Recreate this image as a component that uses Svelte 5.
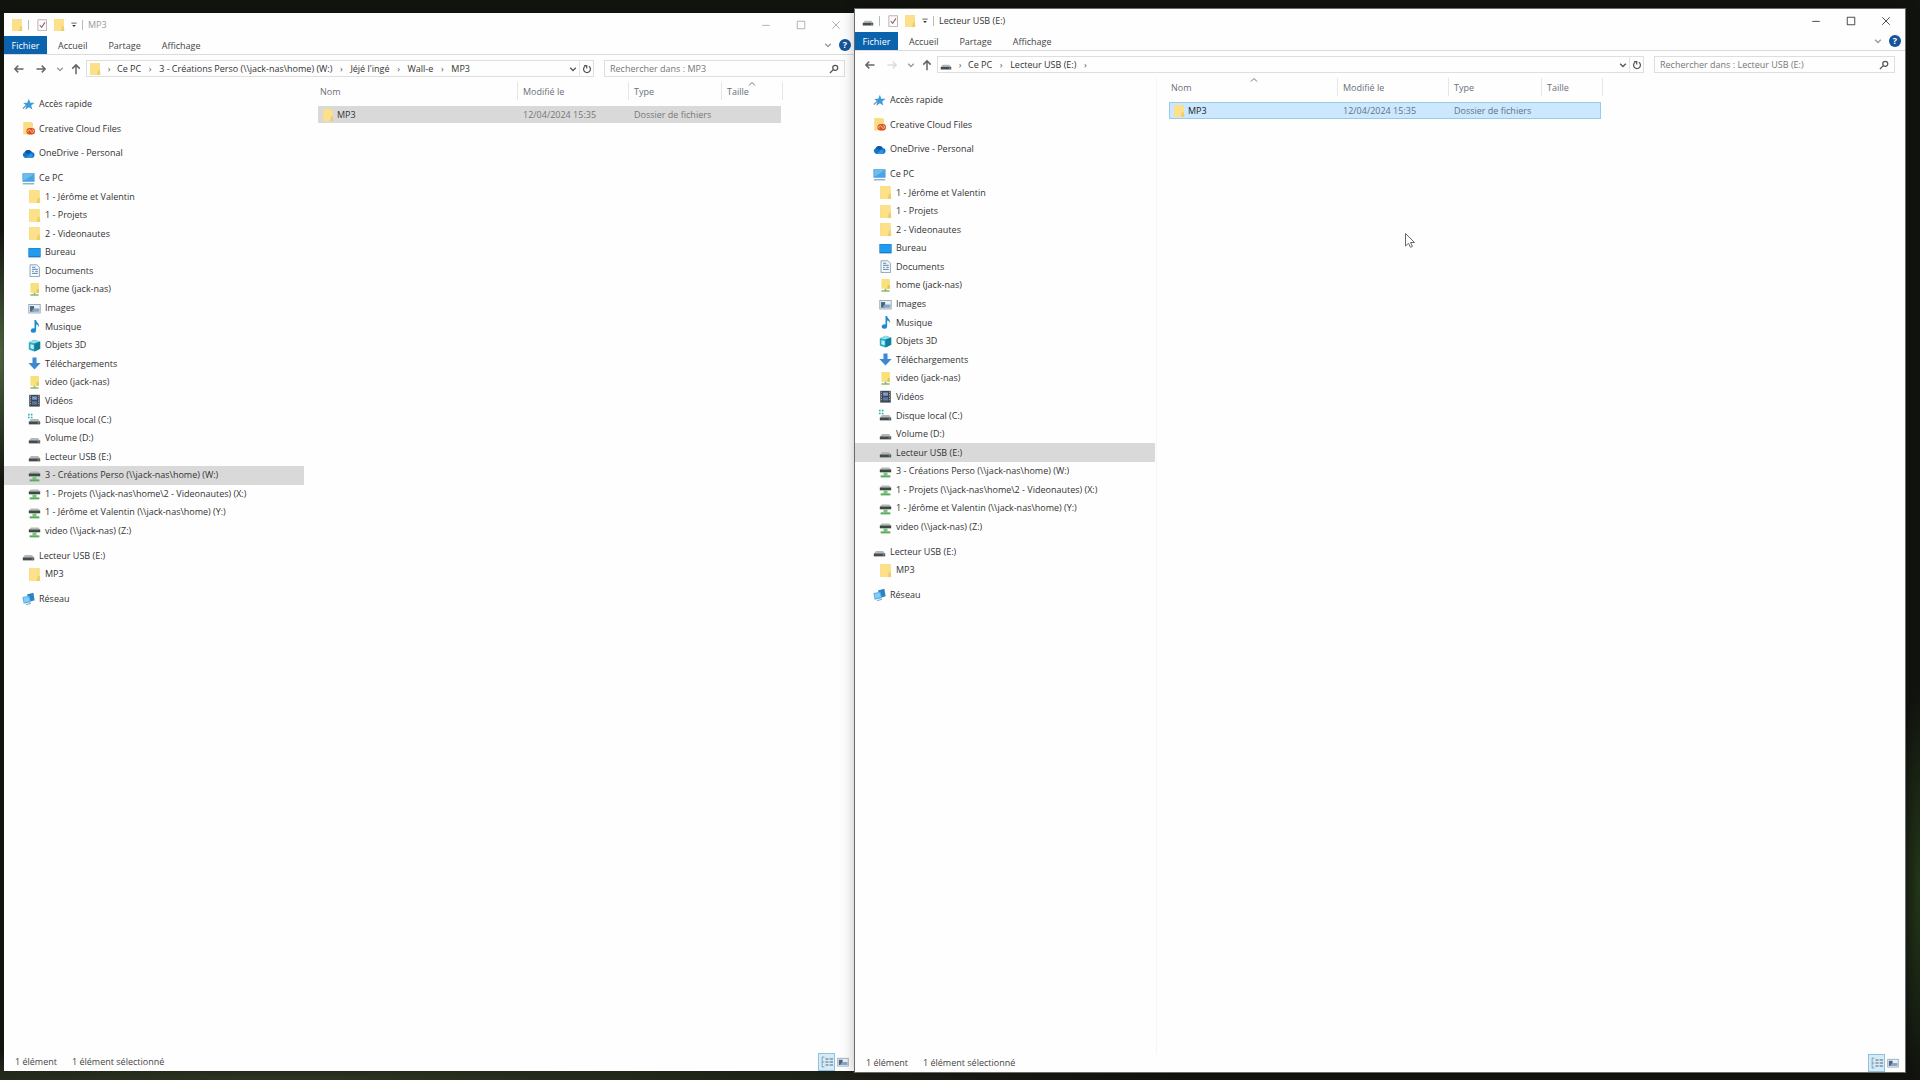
<script>
  const tree = [
    { label: 'Accès rapide', icon: 'star', top: true },
    { label: 'Creative Cloud Files', icon: 'cloudfolder', top: true },
    { label: 'OneDrive - Personal', icon: 'onedrive', top: true },
    { label: 'Ce PC', icon: 'pc', top: true },
    { label: '1 - Jérôme et Valentin', icon: 'folder' },
    { label: '1 - Projets', icon: 'folder' },
    { label: '2 - Videonautes', icon: 'folder' },
    { label: 'Bureau', icon: 'desktop' },
    { label: 'Documents', icon: 'document' },
    { label: 'home (jack-nas)', icon: 'netfolder' },
    { label: 'Images', icon: 'picture' },
    { label: 'Musique', icon: 'music' },
    { label: 'Objets 3D', icon: 'cube' },
    { label: 'Téléchargements', icon: 'download' },
    { label: 'video (jack-nas)', icon: 'netfolder' },
    { label: 'Vidéos', icon: 'film' },
    { label: 'Disque local (C:)', icon: 'sysdrive' },
    { label: 'Volume (D:)', icon: 'drive' },
    { label: 'Lecteur USB (E:)', icon: 'drive', id: 'E' },
    { label: '3 - Créations Perso (\\\\jack-nas\\home) (W:)', icon: 'netdrive', id: 'W' },
    { label: '1 - Projets (\\\\jack-nas\\home\\2 - Videonautes) (X:)', icon: 'netdrive' },
    { label: '1 - Jérôme et Valentin (\\\\jack-nas\\home) (Y:)', icon: 'netdrive' },
    { label: 'video (\\\\jack-nas) (Z:)', icon: 'netdrive' },
    { label: 'Lecteur USB (E:)', icon: 'drive', top: true },
    { label: 'MP3', icon: 'folder' },
    { label: 'Réseau', icon: 'network', top: true }
  ];

  const windows = [
    {
      key: 'left', title: 'MP3', icon: 'folder', active: false, selected: 'W', sort: 'Taille', forward: true,
      path: ['Ce PC', '3 - Créations Perso (\\\\jack-nas\\home) (W:)', "Jéjé l'ingé", 'Wall-e', 'MP3'], trailing: false
    },
    {
      key: 'right', title: 'Lecteur USB (E:)', icon: 'drive', active: true, selected: 'E', sort: 'Nom', forward: false,
      path: ['Ce PC', 'Lecteur USB (E:)'], trailing: true
    }
  ];

  const columns = ['Nom', 'Modifié le', 'Type', 'Taille'];
  const tabs = ['Accueil', 'Partage', 'Affichage'];
</script>

{#snippet icon(name)}
  <svg class="icon" viewBox="0 0 16 16" aria-hidden="true">
    {#if name === 'folder'}
      <path d="M1.500 0H14v12.500L15 13v3H1.500z" fill="#f0d068" />
      <path d="M1.500 0h10l3 1.500V16h-13z" fill="#fce08a" />
      <path d="M12.500 9l2 1v6H10.500z" fill="#edcd66" />
    {:else if name === 'star'}
      <path d="M8.500 1l1.700 4.700 5.300.2-4.200 3.200 1.500 5.200-4.400-2.900L4 14.500l1.400-5.300L1.500 6l5-.3z" fill="#3b9bdc" />
      <path d="M1 13l4-4" stroke="#6d8ea8" stroke-width="1.500" />
    {:else if name === 'cloudfolder'}
      <path d="M1.500 0h10l2 1.500V15.500h-12z" fill="#fbdc83" />
      <rect x="5.500" y="7.500" width="10.500" height="8" rx="4" fill="#d8501d" />
      <path d="M8 12.800a1.700 1.700 0 1 1 2.500-2l1.500 1.800a1.600 1.600 0 1 0 0-2.800" fill="none" stroke="#ffe2cc" stroke-width="1" />
    {:else if name === 'onedrive'}
      <path d="M4 13.500a4 4 0 0 1-.6-7.500A5 5 0 0 1 12 6a3.800 3.800 0 0 1 .5 7.500z" fill="#1673c8" />
      <path d="M3.400 6A5 5 0 0 1 12 6L7.500 8.500z" fill="#0d55a0" />
      <path d="M4 13.500l7-5.500a4 4 0 0 1 1.500 5.500z" fill="#2c94e4" />
    {:else if name === 'pc'}
      <rect x=".5" y="1.500" width="15" height="10.500" fill="#4f9fd6" />
      <rect x="1.500" y="2.500" width="13" height="8.500" fill="#6dbcf0" />
      <path d="M1.500 11l13-8.500V11z" fill="#4aa5e4" />
      <path d="M1 14.500h14" stroke="#76a4c4" stroke-width="1.500" />
    {:else if name === 'desktop'}
      <rect x=".5" y="2.500" width="15" height="11.500" fill="#1876c0" />
      <rect x="1" y="3" width="14" height="9.500" fill="#1f9cf0" />
    {:else if name === 'document'}
      <path d="M2.500 1h8.500l3 3v11.500H2.500z" fill="#f5f9fc" stroke="#7890a8" />
      <path d="M5 4h4M5 6.500h7M5 9h2M9 9h3M5 11.500h7" stroke="#4f7fb0" stroke-width="1.200" />
    {:else if name === 'netfolder'}
      <path d="M3 0h9.500l1 1V12H3z" fill="#f8e07c" />
      <path d="M11 7l2.500 1v4H10z" fill="#dfc75c" />
      <path d="M8 12v3M3 14.800h10" stroke="#8fb56a" stroke-width="2" />
    {:else if name === 'picture'}
      <rect x="1" y="3" width="14" height="10.500" fill="#e8f0f6" stroke="#8b9db0" />
      <path d="M2.500 5h5v7h-5z" fill="#4a6684" />
      <path d="M7 8h7v4H4z" fill="#87a5c0" />
    {:else if name === 'music'}
      <path d="M8 0h2c0 3.500 4.500 4 3.500 8.500-1-2.200-2-2.800-3.500-3V13A3.300 2.700 0 1 1 8 10.500z" fill="#1f88ce" />
    {:else if name === 'cube'}
      <path d="M1 4l7-3 7 2v9l-7 3.500L1 13z" fill="#28a9c4" />
      <path d="M1 4l7-3 7 2-7 2.500z" fill="#8fe0ea" />
      <path d="M8 5.500L15 3v9l-7 3.500z" fill="#127e9c" />
      <path d="M3 6.500l4 1v5l-4-1z" fill="#c3f2f4" />
    {:else if name === 'download'}
      <path d="M5.500 .5h5v7H15.500L8 15.500.5 7.500h5z" fill="#3d8ad0" />
    {:else if name === 'film'}
      <rect x="1.500" y="1" width="13" height="14.500" fill="#3d4653" />
      <path d="M3 2v12M13 2v12" stroke="#a9b4c2" stroke-width="1.200" stroke-dasharray="1.500 1.500" />
      <path d="M5 3h6v4H5z" fill="#7f9cc8" />
      <path d="M5 9h6v4H5z" fill="#5d79a4" />
    {:else if name === 'drive' || name === 'sysdrive'}
      {#if name === 'sysdrive'}
        <path d="M0 1h2v2H0zM3.500 1h2v2h-2zM0 4.500h2v2H0zM3.500 4.500h2v2h-2z" fill="#28b5b0" />
      {/if}
      <path d="M3.500 7.500h9L15 11H1z" fill="#b5b8ba" />
      <path d="M1 10.500h14V14H1z" fill="#444a4e" />
      <path d="M12 12.200h2" stroke="#9fd6a0" />
    {:else if name === 'netdrive'}
      <path d="M3.500 3h9L15 5.500H1z" fill="#b2b8b4" />
      <path d="M1 5.500h14V9H1z" fill="#3c4a42" />
      <path d="M5.500 9h5v4h-5z" fill="#7fbf82" />
      <path d="M2 14h12" stroke="#58ad5c" stroke-width="2.500" />
    {:else if name === 'network'}
      <path d="M6 3l8-2 1.500 9-6 2z" fill="#2c83c0" />
      <path d="M.5 6L9 4.500l2 8-9 2z" fill="#5bb2e8" />
      <path d="M2 7.200l6-1 1.500 5-6.500 1.300z" fill="#85cdf6" />
      <path d="M5 15.500l6-1.500" stroke="#5f8fb0" />
    {:else if name === 'check'}
      <path d="M2.500 1h11.500v14.500H2.500z" fill="#fdfbfb" stroke="#a89a9e" />
      <path d="M5 8l2.500 3L12 4.500" fill="none" stroke="#8d6570" stroke-width="1.500" />
    {:else if name === 'back'}
      <path d="M14 8H2.500M7 3.500L2.500 8 7 12.500" class="line" />
    {:else if name === 'forward'}
      <path d="M2 8h11.500M9 3.500L13.500 8 9 12.500" class="line" />
    {:else if name === 'up'}
      <path d="M8 15V2.500M3 7.500l5-5 5 5" class="line" />
    {:else if name === 'down'}
      <path d="M3.500 6L8 10.500 12.500 6" class="line" />
    {:else if name === 'refresh'}
      <path d="M5 3.500a5.500 5.500 0 1 0 6 0M3.500 2.500h4V7" class="line" />
    {:else if name === 'search'}
      <circle cx="10" cy="6" r="4" class="line" />
      <path d="M7 9l-5.500 5.500" class="line" />
    {:else if name === 'menu'}
      <path d="M1 3h14" stroke="currentColor" stroke-width="2" />
      <path d="M3 8h10l-5 5z" fill="currentColor" />
    {:else if name === 'min'}
      <path d="M3 8.500h10" class="thin" />
    {:else if name === 'max'}
      <path d="M3 3h10v10H3z" class="thin" />
    {:else if name === 'close'}
      <path d="M3 3l10 10M13 3L3 13" class="thin" />
    {:else if name === 'details'}
      <path d="M1.500 1v14M1.500 1.500h3M1.500 8h3M1.500 14.500h3" stroke="#7d97aa" stroke-width="1.200" fill="none" />
      <path d="M6 4h4M11.500 4H16M6 8h4M11.500 8H16M6 12h4M11.500 12H16" stroke="#4c6472" stroke-width="1.300" />
    {/if}
  </svg>
{/snippet}

<main class="desktop">
  {#each windows as win (win.key)}
    <section class="window {win.key}" class:active={win.active} aria-label={win.title}>
      <header class="titlebar">
        <span class="appicon">{@render icon(win.icon)}</span>
        <span class="rule"></span>
        <button aria-label="Propriétés">{@render icon('check')}</button>
        <button aria-label="Nouveau dossier">{@render icon('folder')}</button>
        <button class="menu" aria-label="Personnaliser">{@render icon('menu')}</button>
        <span class="rule second"></span>
        <h1>{win.title}</h1>
        <div class="controls">
          <button aria-label="Réduire">{@render icon('min')}</button>
          <button aria-label="Agrandir">{@render icon('max')}</button>
          <button aria-label="Fermer">{@render icon('close')}</button>
        </div>
      </header>

      <div class="ribbon">
        <button class="file">Fichier</button>
        {#each tabs as tab}
          <button class="tab">{tab}</button>
        {/each}
        <button class="expand" aria-label="Développer le ruban">{@render icon('down')}</button>
        <button class="help" aria-label="Aide">?</button>
      </div>

      <div class="addressbar">
        <div class="history">
          <button class="arrow" aria-label="Précédent">{@render icon('back')}</button>
          <button class="arrow" class:off={!win.forward} aria-label="Suivant">{@render icon('forward')}</button>
          <button class="recent" aria-label="Emplacements récents">{@render icon('down')}</button>
          <button class="parent" aria-label="Dossier parent">{@render icon('up')}</button>
        </div>
        <nav class="path" aria-label="Chemin">
          <span class="place">{@render icon(win.icon)}</span>
          {#each win.path as part}
            <span class="sep">›</span>
            <button>{part}</button>
          {/each}
          {#if win.trailing}<span class="sep">›</span>{/if}
          <span class="grow"></span>
          <button class="drop" aria-label="Adresses précédentes">{@render icon('down')}</button>
          <button class="reload" aria-label="Actualiser">{@render icon('refresh')}</button>
        </nav>
        <label class="search">
          <input type="search" aria-label="Rechercher" placeholder="Rechercher dans : {win.title}" />
          {@render icon('search')}
        </label>
      </div>

      <div class="body">
        <nav class="side" aria-label="Volet de navigation">
          <ul>
            {#each tree as node, i}
              <li class:top={node.top} class:spaced={node.top && i > 0} class:selected={node.id === win.selected}>
                <a href="#{win.key}-{i}">{@render icon(node.icon)}<span>{node.label}</span></a>
              </li>
            {/each}
          </ul>
        </nav>
        <div class="files">
          <table>
            <colgroup>
              <col class="c-name" /><col class="c-date" /><col class="c-type" /><col class="c-size" /><col class="c-end" />
            </colgroup>
            <thead>
              <tr>
                {#each columns as col}
                  <th scope="col">
                    {#if col === win.sort}
                      <svg class="sort" viewBox="0 0 8 4" aria-hidden="true"><path d="M1 3.500L4 .5l3 3" class="thin" /></svg>
                    {/if}
                    {col}
                  </th>
                {/each}
                <td></td>
              </tr>
            </thead>
            <tbody>
              <tr>
                <td><div class="name">{@render icon('folder')}MP3</div></td>
                <td>12/04/2024 15:35</td>
                <td>Dossier de fichiers</td>
                <td></td>
              </tr>
            </tbody>
          </table>
        </div>
      </div>

      <footer>
        <span>1 élément</span>
        <span>1 élément sélectionné</span>
        <div class="views">
          <button class="on" aria-label="Détails">{@render icon('details')}</button>
          <button aria-label="Grandes icônes">{@render icon('picture')}</button>
        </div>
      </footer>
    </section>
  {/each}

  <svg class="pointer" viewBox="0 0 10 15" aria-hidden="true">
    <path d="M.5.5v12.500l3-2.700 2 4 2-1-2-3.800h4z" fill="#fff" stroke="#666" />
  </svg>
</main>

<style>
  :global(body) {
    margin: 0;
  }
  .desktop {
    position: relative;
    box-sizing: border-box;
    min-height: 100vh;
    padding: 8px 14px 7px 4px;
    display: grid;
    grid-template-columns: minmax(0, 850fr) minmax(0, 1052fr);
    background:
      radial-gradient(ellipse 20px 130px at 0 33%, #4d6440, transparent),
      radial-gradient(ellipse 24px 200px at 100% 82%, #24381a, transparent),
      radial-gradient(ellipse 900px 30px at 15% 100%, #2e3622, transparent),
      #11130e;
    color: #333;
    font: 9px/14px 'Open Sans', 'Noto Sans', sans-serif;
  }
  button {
    display: flex;
    align-items: center;
    justify-content: center;
    margin: 0;
    padding: 0;
    border: 0;
    background: none;
    color: inherit;
    font: inherit;
    white-space: nowrap;
  }
  .icon {
    display: block;
    flex: none;
    width: 12px;
    height: 12px;
  }
  .line {
    fill: none;
    stroke: currentColor;
    stroke-width: 2;
  }
  .thin {
    fill: none;
    stroke: currentColor;
    stroke-width: 1;
  }
  .window {
    display: flex;
    flex-direction: column;
    min-width: 0;
    background: #fefefe;
  }
  .left {
    margin: 5px -1px 2px 0;
  }
  .right {
    border: 1px solid #6b6b6b;
    box-shadow: 0 0 12px rgba(0, 0, 0, 0.25);
  }

  .titlebar {
    display: flex;
    align-items: center;
    height: 23px;
    padding-left: 7px;
    color: #9a9a9a;
  }
  .active .titlebar {
    color: #333;
  }
  .rule {
    width: 1px;
    height: 10px;
    margin: 0 7px 0 5px;
    background: #bbb;
  }
  .rule.second {
    margin: 0 5px 0 4px;
  }
  .titlebar > button {
    width: 12px;
    margin-right: 5px;
  }
  .titlebar > .menu {
    width: 8px;
    margin-right: 0;
    color: #333;
  }
  .menu .icon {
    width: 6px;
    height: 6px;
  }
  h1 {
    margin: 0;
    font: inherit;
  }
  .controls {
    display: flex;
    margin: 0 2px 0 auto;
  }
  .controls button {
    width: 35px;
    height: 23px;
  }
  .active .controls {
    color: #111;
  }

  .ribbon {
    display: flex;
    height: 18px;
    border-bottom: 1px solid #dadbdc;
    color: #444;
  }
  .file,
  .tab {
    padding-top: 1px;
  }
  .file {
    width: 43px;
    background: #0b63ae;
    color: #fff;
  }
  .tab {
    margin-left: 11px;
    padding-right: 10px;
  }
  .expand {
    margin-left: auto;
    color: #999;
  }
  .expand .icon,
  .recent .icon,
  .drop .icon {
    width: 10px;
    height: 10px;
  }
  .help {
    align-self: center;
    width: 12px;
    height: 12px;
    margin: 0 4px 0 6px;
    border-radius: 50%;
    background: #15539a;
    color: #fff;
    font-weight: 700;
  }

  .addressbar {
    display: flex;
    height: 17px;
    padding: 5px 10px 5px 4px;
  }
  .history {
    display: flex;
    align-items: center;
    width: 78px;
    color: #666;
  }
  .arrow {
    width: 22px;
  }
  .parent {
    width: 16px;
  }
  .off {
    color: #ddd;
  }
  .recent {
    width: 16px;
    color: #999;
  }
  .path,
  .search {
    display: flex;
    align-items: center;
    box-sizing: border-box;
    border: 1px solid #dedede;
  }
  .path {
    flex: 1;
    min-width: 0;
    padding-left: 2px;
  }
  .sep {
    width: 18px;
    color: #555;
    text-align: center;
  }
  .place + .sep {
    width: 16px;
  }
  .grow {
    flex: 1;
  }
  .drop {
    width: 12px;
    color: #555;
  }
  .reload {
    align-self: stretch;
    width: 14px;
    border-left: 1px solid #e4e4e4;
    color: #555;
  }
  .reload .icon,
  .search .icon {
    width: 10px;
    height: 10px;
  }
  .search {
    width: 241px;
    margin-left: 10px;
    padding: 0 5px;
    color: #555;
  }
  input {
    flex: 1;
    min-width: 0;
    padding: 0;
    border: 0;
    outline: 0;
    background: none;
    color: #333;
    font: inherit;
  }
  input::placeholder {
    color: #777;
    opacity: 1;
  }

  .body {
    display: flex;
    flex: 1;
    min-height: 0;
  }
  .side {
    box-sizing: border-box;
    width: 302px;
    padding: 13px 1px 0 0;
    border-right: 1px solid #f6f6f6;
  }
  .left .side {
    border-color: transparent;
  }
  ul {
    display: flex;
    flex-direction: column;
    height: 513px;
    margin: 0;
    padding: 0;
    list-style: none;
  }
  li {
    display: flex;
    flex: 1;
    min-height: 0;
  }
  .spaced {
    margin-top: 6px;
  }
  .selected {
    background: #d9d9d9;
  }
  a {
    display: flex;
    flex: 1;
    align-items: center;
    gap: 4px;
    padding-left: 24px;
    color: inherit;
    text-decoration: none;
    white-space: nowrap;
  }
  .top a {
    padding-left: 18px;
  }
  a .icon {
    width: 13px;
    height: 13px;
  }
  .files {
    flex: 1;
    min-width: 0;
    padding-left: 12px;
  }
  table {
    width: 465px;
    border-collapse: separate;
    border-spacing: 0;
    table-layout: fixed;
  }
  .right table {
    width: 434px;
  }
  .c-date {
    width: 111px;
  }
  .c-type {
    width: 93px;
  }
  .c-size {
    width: 59px;
  }
  .c-end {
    width: 2px;
  }
  th,
  td {
    box-sizing: border-box;
    padding: 0 0 0 5px;
    font-weight: 400;
    text-align: left;
    white-space: nowrap;
  }
  thead th,
  thead td {
    position: relative;
    height: 24px;
    padding-bottom: 5px;
    background: linear-gradient(#e6e6e6, #e6e6e6) right top / 1px 18px no-repeat;
    color: #6a7078;
  }
  thead td {
    padding: 0;
  }
  th:first-child {
    padding-left: 2px;
  }
  th:nth-child(4) {
    background: none;
  }
  .sort {
    position: absolute;
    top: 0;
    left: 50%;
    width: 8px;
    height: 4px;
    margin-left: -4px;
  }
  tbody td {
    height: 17px;
    background: #d9d9d9;
    color: #777;
  }
  tbody td:first-child {
    padding-left: 4px;
    color: #333;
  }
  .active tbody td {
    border: solid #99cbe8;
    border-width: 1px 0;
    background: #cce8ff;
    color: #5f7385;
  }
  .active tbody td:first-child {
    border-left-width: 1px;
    padding-left: 3px;
    color: #222;
  }
  .active tbody td:last-child {
    border-right-width: 1px;
  }
  .name {
    display: flex;
    align-items: center;
    gap: 3px;
  }

  footer {
    display: flex;
    align-items: center;
    gap: 15px;
    height: 18px;
    padding: 0 6px 0 11px;
    color: #444;
  }
  .views {
    display: flex;
    gap: 2px;
    margin-left: auto;
  }
  .views .on {
    box-sizing: border-box;
    width: 17px;
    height: 18px;
    border: 1px solid #8cc3de;
    background: #d5ecf8;
  }
  .pointer {
    position: absolute;
    top: 233px;
    left: 1405px;
    width: 10px;
    height: 15px;
  }
</style>
